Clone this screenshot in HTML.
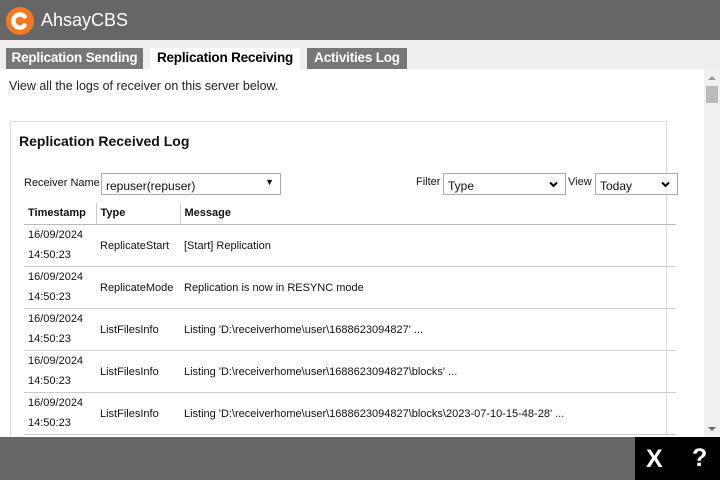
<!DOCTYPE html>
<html><head><style>
*{margin:0;padding:0;box-sizing:border-box}
html,body{width:720px;height:480px;overflow:hidden}
body{font-family:"Liberation Sans",Arial,sans-serif;background:#eee;position:relative}
.hdr{position:absolute;left:0;top:0;width:720px;height:40px;background:#666}
.logo{position:absolute;left:6px;top:7px;width:28px;height:28px;border-radius:50%;background:#f47b20}
.hdr .t{position:absolute;left:41px;top:10px;color:#fff;font-size:18px}
.tab{position:absolute;top:48px;height:21px;font-size:13.5px;font-weight:bold;color:#fff;background:#777;text-align:center;line-height:20px;letter-spacing:-0.2px}
.tab.a{background:#fff;color:#000}
.content{position:absolute;left:0;top:69px;width:704px;height:368px;background:#fff;overflow:hidden}
.sb{position:absolute;left:704px;top:69px;width:16px;height:368px;background:#f0f0f0}
.desc{position:absolute;left:9px;top:10px;font-size:12.5px;color:#222}
.panel{position:absolute;left:10px;top:52px;width:657px;height:400px;border:1px solid #ddd}
.ttl{position:absolute;left:19px;top:64px;font-size:14px;font-weight:bold;color:#111}
.lbl{position:absolute;font-size:11px;color:#111}
.sel{position:absolute;height:22px;border:1px solid #aaa;background:#fff;font-size:12px;padding:5px 4px;color:#111}
.chev{position:absolute;right:7px;top:7px}
table{position:absolute;left:24px;top:134px;width:652px;border-collapse:collapse;font-size:11px;color:#111}
th{text-align:left;height:21px;padding-left:4px;border-bottom:1px solid #bbb}
th+th{border-left:1px solid #ccc}
td{height:42px;border-bottom:1px solid #ccc;padding-left:4px;vertical-align:middle;padding-top:2px}
td:first-child{line-height:20px;padding-top:0}
.bot{position:absolute;left:0;top:437px;width:720px;height:43px;background:#666}
.blk{position:absolute;left:635px;top:437px;width:85px;height:43px;background:#000;color:#fff;font-weight:bold;font-size:25px}
</style></head><body>
<div class="hdr"><div class="logo"><svg width="28" height="28" viewBox="0 0 28 28"><path d="M18.5 9.5 A6.5 6.5 0 1 0 18.5 18.5" fill="none" stroke="#fff" stroke-width="4.5" stroke-linecap="round"/></svg></div><div class="t">AhsayCBS</div></div>
<div class="tab" style="left:6px;width:137px">Replication Sending</div>
<div class="tab a" style="left:150px;width:150px">Replication Receiving</div>
<div class="tab" style="left:307px;width:100px">Activities Log</div>
<div class="content">
<div class="desc">View all the logs of receiver on this server below.</div>
<div class="panel"></div>
<div class="ttl">Replication Received Log</div>
<div class="lbl" style="left:24px;top:108px">Receiver Name</div>
<div class="sel" style="left:101px;top:104px;width:180px">repuser(repuser)<span style="position:absolute;right:6px;top:3px;font-size:9px">▼</span></div>
<div class="lbl" style="left:416px;top:107px">Filter</div>
<div class="sel" style="left:443px;top:104px;width:123px">Type<svg class="chev" width="9" height="7" viewBox="0 0 9 7"><path d="M1 1.5 L4.5 5 L8 1.5" fill="none" stroke="#000" stroke-width="2"/></svg></div>
<div class="lbl" style="left:568px;top:107px">View</div>
<div class="sel" style="left:595px;top:104px;width:83px">Today<svg class="chev" width="9" height="7" viewBox="0 0 9 7"><path d="M1 1.5 L4.5 5 L8 1.5" fill="none" stroke="#000" stroke-width="2"/></svg></div>
<table>
<tr><th style="width:72px">Timestamp</th><th style="width:84px">Type</th><th>Message</th></tr>
<tr><td>16/09/2024<br>14:50:23</td><td>ReplicateStart</td><td>[Start] Replication</td></tr>
<tr><td>16/09/2024<br>14:50:23</td><td>ReplicateMode</td><td>Replication is now in RESYNC mode</td></tr>
<tr><td>16/09/2024<br>14:50:23</td><td>ListFilesInfo</td><td>Listing 'D:\receiverhome\user\1688623094827' ...</td></tr>
<tr><td>16/09/2024<br>14:50:23</td><td>ListFilesInfo</td><td>Listing 'D:\receiverhome\user\1688623094827\blocks' ...</td></tr>
<tr><td>16/09/2024<br>14:50:23</td><td>ListFilesInfo</td><td>Listing 'D:\receiverhome\user\1688623094827\blocks\2023-07-10-15-48-28' ...</td></tr>
</table>
</div>
<div class="sb"><div style="position:absolute;left:4px;top:7px;border:4px solid transparent;border-bottom:4px solid #999;border-top:0"></div><div style="position:absolute;left:2px;top:17px;width:12px;height:17px;background:#bbb"></div><div style="position:absolute;left:4px;top:358px;border:4px solid transparent;border-top:4px solid #666;border-bottom:0"></div></div>
<div class="bot"></div>
<div class="blk"><span style="position:absolute;left:11px;top:8px">X</span><span style="position:absolute;left:57px;top:7px">?</span></div>
</body></html>
